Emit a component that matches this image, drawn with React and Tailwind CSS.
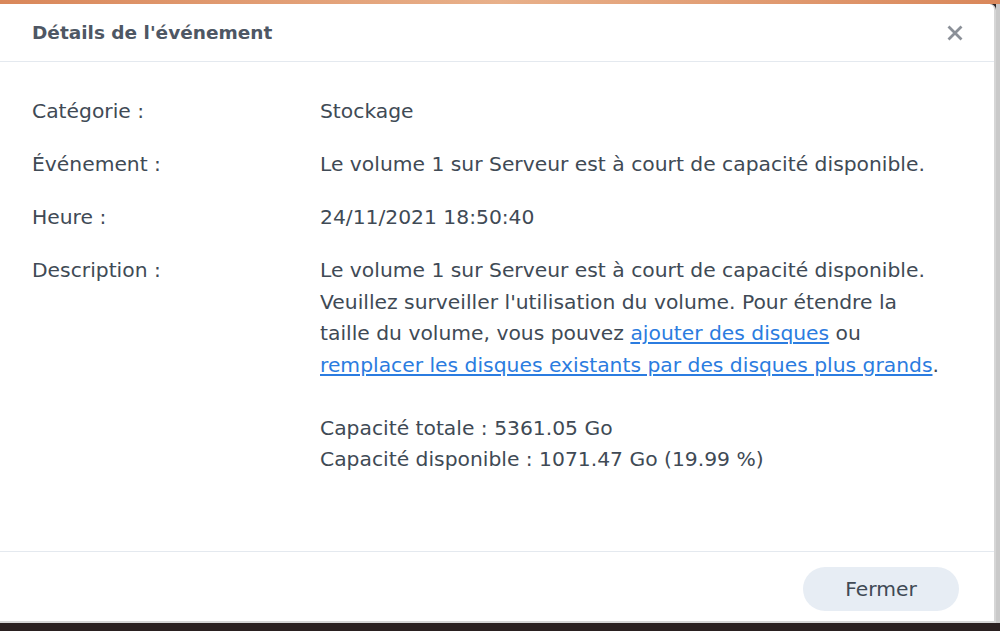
const ROWS = [
  { label: "Catégorie :", value: "Stockage" },
  { label: "Événement :", value: "Le volume 1 sur Serveur est à court de capacité disponible." },
  { label: "Heure :", value: "24/11/2021 18:50:40" },
];

function CloseIcon() {
  return (
    <svg width="16" height="16" viewBox="0 0 16 16" fill="none">
      <path d="M1.5 1.5 L14.5 14.5 M14.5 1.5 L1.5 14.5" stroke="#8b9098" strokeWidth="2.8" />
    </svg>
  );
}

export default function App() {
  return (
    <div
      className="w-[1000px] h-[631px] overflow-hidden bg-[#2c2424] flex flex-col"
      style={{ fontFamily: '"DejaVu Sans", Verdana, sans-serif' }}
    >
      {/* window behind, top edge */}
      <div className="h-[4px] bg-gradient-to-r from-[#d9875a] via-[#e8b08a] to-[#d9875a]" />

      <div className="flex">
        {/* Dialog */}
        <div className="w-[996px] h-[619px] bg-white rounded-tr-[6px] border-r-2 border-b-2 border-[#d6d6d6] flex flex-col">
          {/* Header */}
          <div className="h-[58px] flex items-center justify-between pl-[32px] pr-[31px] border-b border-[#e4e9ef]">
            <span className="text-[18.5px] font-bold text-[#4e5764]">Détails de l'événement</span>
            <CloseIcon />
          </div>

          {/* Body */}
          <div className="flex-1 pt-[34px] pl-[32px] text-[20.3px] leading-[31.5px] text-[#404a55] flex flex-col gap-[21.5px]">
            {ROWS.map((r) => (
              <div key={r.label} className="flex">
                <div className="w-[288px] shrink-0">{r.label}</div>
                <div>{r.value}</div>
              </div>
            ))}
            <div className="flex">
              <div className="w-[288px] shrink-0">Description :</div>
              <div>
                Le volume 1 sur Serveur est à court de capacité disponible.
                <br />
                Veuillez surveiller l'utilisation du volume. Pour étendre la
                <br />
                taille du volume, vous pouvez{" "}
                <a className="text-[#2b7ce0] underline underline-offset-2">ajouter des disques</a> ou
                <br />
                <a className="text-[#2b7ce0] underline underline-offset-2">
                  remplacer les disques existants par des disques plus grands
                </a>
                .
                <br />
                <br />
                Capacité totale : 5361.05 Go
                <br />
                Capacité disponible : 1071.47 Go (19.99 %)
              </div>
            </div>
          </div>

          {/* Footer */}
          <div className="h-[70px] border-t border-[#e4e9ef] flex justify-end items-start pt-[15px] pr-[35px]">
            <button className="w-[156px] h-[44px] rounded-full bg-[#e7edf4] text-[20.3px] text-[#404a55]">
              Fermer
            </button>
          </div>
        </div>
        <div className="flex-1 bg-[#c9c9c9]" />
      </div>
      <div className="flex-1 bg-[#2a2020]" />
    </div>
  );
}
